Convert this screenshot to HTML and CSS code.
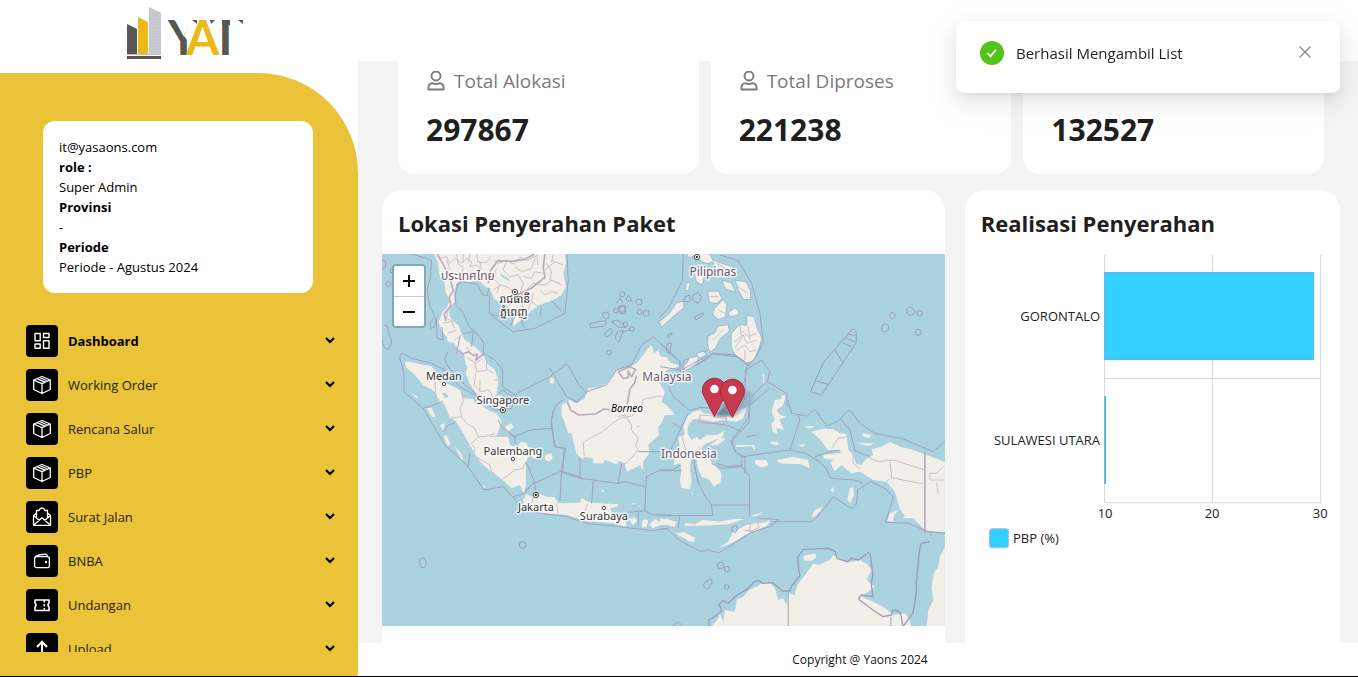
FILE: index.html
```html
<!DOCTYPE html>
<html lang="id">
<head>
<meta charset="utf-8">
<title>Dashboard</title>
<link rel="stylesheet" href="styles.css">
</head>
<body>
<svg class="defs" width="0" height="0" aria-hidden="true">
  <symbol id="chev" viewBox="0 0 12 12"><path d="M2 3l4 4 4-4" fill="none" stroke="currentColor" stroke-width="2.2"/></symbol>
  <symbol id="box" viewBox="0 0 20 20"><path d="M10 1.500L18.300 5v9.500L10 18.500 1.700 14.500V5zM1.700 5L10 8.700 18.300 5M10 8.700v9.800M5 3.600l8 3.500M7.500 2.500l8 3.500" fill="none" stroke="currentColor" stroke-width="1.300" stroke-linejoin="round"/></symbol>
  <symbol id="user" viewBox="0 0 20 20"><g fill="none" stroke="currentColor" stroke-width="1.900"><circle cx="10" cy="5" r="4.500"/><path d="M2.300 18.500c-.3-4 1.200-6.200 4.300-6.200 1.200 0 1.800.8 3.400.8s2.200-.8 3.400-.8c3.100 0 4.600 2.200 4.300 6.200z" stroke-linejoin="round"/></g></symbol>
</svg>
<div class="app">
  <aside class="sidebar">
    <div class="brand">
      <svg class="logo" viewBox="124 6 122 56" role="img" aria-label="YAT">
        <path d="M127 24l10 5v25h-10z" fill="#575755"/>
        <path d="M138 17l10 5v32h-10z" fill="#ebb91a"/>
        <path d="M149 7l12 6v41h-12z" fill="#c6c5ca"/>
        <path d="M151 12v42M154 11v43M157 14v40M160 15v39" stroke="#d8d7dc" stroke-dasharray="1 2"/>
        <path d="M127 54.500h34" stroke="#c9b9c4"/>
        <path d="M127 56h34v3h-34z" fill="#575755"/>
        <text class="mark" x="168" y="55">Y</text>
        <path d="M184 36l5-11 1-6h12v15l-12 14h-3v-8z" fill="#fff"/>
        <path d="M192 20h5v4z" fill="#575755"/>
        <text class="mark" x="211" y="55">T</text>
        <path d="M208 19h14v8h-14zM230 19h14v8h-14z" fill="#fff"/>
        <path d="M210 20h5l-4 4zM238 20h5v4z" fill="#575755"/>
        <text class="mark accent" x="186" y="55">A</text>
      </svg>
    </div>
    <div class="panel">
      <div class="profile">
        <div>it@yasaons.com</div><b>role :</b><div>Super Admin</div><b>Provinsi</b><div>-</div><b>Periode</b><div>Periode - Agustus 2024</div>
      </div>
      <nav class="menu">
        <a class="item active" href="#"><span class="tile"><svg viewBox="0 0 20 20"><path d="M3 2.500h5.200v7.200H3zM11.500 2.500H17v4h-5.500zM3 13h5.200v4.300H3zM11.500 9.800H17v7.500h-5.500z" fill="none" stroke="currentColor" stroke-width="1.400" stroke-linejoin="round"/></svg></span><span class="name">Dashboard</span><svg class="chev"><use href="#chev"/></svg></a>
        <a class="item" href="#"><span class="tile"><svg><use href="#box"/></svg></span><span class="name">Working Order</span><svg class="chev"><use href="#chev"/></svg></a>
        <a class="item" href="#"><span class="tile"><svg><use href="#box"/></svg></span><span class="name">Rencana Salur</span><svg class="chev"><use href="#chev"/></svg></a>
        <a class="item" href="#"><span class="tile"><svg><use href="#box"/></svg></span><span class="name">PBP</span><svg class="chev"><use href="#chev"/></svg></a>
        <a class="item" href="#"><span class="tile"><svg viewBox="0 0 20 20"><path d="M4.500 11V3.500h2.500Q8 1 10 1t3 2.500h2.500V11M4.500 6L1.500 8.500v9.800h17V8.500L15.500 6M1.500 8.500l6 5M18.500 8.500l-6 5M1.500 18.300L10 10.800l8.500 7.500" fill="none" stroke="currentColor" stroke-width="1.300" stroke-linejoin="round"/></svg></span><span class="name">Surat Jalan</span><svg class="chev"><use href="#chev"/></svg></a>
        <a class="item" href="#"><span class="tile"><svg viewBox="0 0 20 20"><rect x="2.600" y="5.700" width="14.800" height="11" rx="2" fill="none" stroke="currentColor" stroke-width="1.300"/><path d="M3 6.500Q4 4.500 7 4l6-.9q2-.2 2.500 2" fill="none" stroke="currentColor" stroke-width="1.300"/><circle cx="14" cy="11" r="1.200" fill="currentColor"/></svg></span><span class="name">BNBA</span><svg class="chev"><use href="#chev"/></svg></a>
        <a class="item" href="#"><span class="tile"><svg viewBox="0 0 20 20"><path d="M3 5h14v3q-2 2 0 4v3.500H3V12q2-2 0-4z" fill="none" stroke="currentColor" stroke-width="1.600" stroke-linejoin="round"/><path d="M12.300 5v10.500" stroke="currentColor" stroke-width="1.600" stroke-dasharray="2.500 1.500"/></svg></span><span class="name">Undangan</span><svg class="chev"><use href="#chev"/></svg></a>
        <a class="item" href="#"><span class="tile"><svg viewBox="0 0 20 20"><path d="M10 18V3M5 8l5-5.300L15 8" fill="none" stroke="currentColor" stroke-width="2"/></svg></span><span class="name">Upload</span><svg class="chev"><use href="#chev"/></svg></a>
      </nav>
    </div>
  </aside>
  <div class="page">
    <header class="topbar"></header>
    <main class="content">
      <section class="stats">
        <article class="stat"><p class="label"><svg><use href="#user"/></svg>Total Alokasi</p><p class="value">297867</p></article>
        <article class="stat"><p class="label"><svg><use href="#user"/></svg>Total Diproses</p><p class="value">221238</p></article>
        <article class="stat"><p class="value">132527</p></article>
      </section>
      <section class="cards">
        <article class="card">
          <h2>Lokasi Penyerahan Paket</h2>
          <div class="map">
            <svg class="canvas" viewBox="382 254 563 372" preserveAspectRatio="xMidYMid slice">
              <!-- mainland and peninsula -->
              <g transform="translate(380 180) scale(.33333)">
                <path class="land" d="M160 215L175 250 178 285 192 298 198 340 210 360 200 385 188 395 176 425 184 450 200 470 205 486 222 488 240 516 252 520 256 550 262 560 258 580 268 610 282 630 295 655 320 675 370 690 385 670 372 655 350 640 355 600 345 570 320 550 310 525 290 505 270 490 255 480 244 460 235 435 222 425 210 410 208 385 225 365 222 335 232 310 240 298 260 306 295 300 315 320 330 325 345 360 368 367 385 380 402 400 400 440 415 425 440 410 450 395 478 375 515 362 545 345 558 320 550 280 558 250 556 215Z"/>
                <path class="sea" d="M360 280l25 15 5 10-25-15z"/>
                <path class="prov" d="M180 235l20-5 10 20 15-15 20 15 15-15 15 10-5 15 20-5 15 15-5-25M230 222l5 30 15 10-5 30 20 10M200 240l10 25-15 15 20 10M250 222v25M270 222l-5 25M290 222l5 25 25 0 15-20M340 240l15 10 25-10 20 12 20-20 20 10 30-15M350 265l-10 30 20 20-10 25M380 240l-10 30 20 20 25-5 15 25-10 30 20 10M405 260l20 15 30-10 10-30M430 290l25 5 10-20 25 5M440 330l20-20 35 5 20-15 30 15M460 340l-5 25 20 15M480 330l15 15 20-10 20 5M500 250l15 25-5 25 30 10M495 270l30-25 25 10M430 345l25 15-10 30M385 380l20-20 20 10 10 25-20 15M340 330l25-15 25 10 10 15M470 225l5 30M520 222l-5 25M205 390l-5 25 20 10M190 430l25-5 10 20M205 460l25-10M225 480l20-15M220 505l15 10M258 530l30 20 20-15M285 550l5 25 35-5 15 10M288 575l-5 40 20 20 25-5 10 20M300 600v35M320 530v40M260 500l10 20M340 600h14"/>
                <path class="nation" d="M172 222l20 35 18 35 10 40-12 20 5 25-20 25 5 22M325 310l8-40 20-28 40 2 40-5 30-17M495 222l-5 40 5 30-40 32-45 22M238 510l10 12 18-7 15 12 12-5-5 18 25-20"/>
                <path class="bound" d="M95 222l60 18-3 50-10 40 8 50 15 30-15 20 2 15 12-5 5-25 3 60 18 5-5-40M235 310l-9 35 2 30 22 25 18 40 32 30 12 20-2 30 35 20 23 30v50l42 28M228 315l20-10 45 8 14 30 15 5 5-25M330 340l-2 60 37 30 35 25 65-10 90-45 10-100-4-80M328 400l20 8 60-15M390 440l15-30M430 440l-8-30M485 380l-5 30M515 362l30 32M250 460l30-5M280 455l-5 45M205 515l-5 10-6 15 10 20 40 45 55 45M240 470l-10 50"/>
                <g class="ring"><path d="M6 240q12 0 12 12t-12 16M12 435q14 0 12 14t8 24q8 20-8 36-18-5-16-30M630 430l45-8q10 10-5 16l-38 6zM672 462l18-16q12 5 5 16l-16 10zM705 475l8-20 18-4-8 20-6 16zM695 425l15-5 18 10 8 12-20 0zM720 400l-5-20 20-5 3 25zM710 370l10-15 10 15M738 360l8-15 10 18zM728 455l25-5"/><circle cx="26" cy="312" r="8"/><circle cx="39" cy="271" r="8"/><circle cx="727" cy="343" r="8"/><circle cx="777" cy="366" r="9"/><circle cx="799" cy="400" r="9"/><circle cx="779" cy="396" r="7"/><circle cx="727" cy="388" r="9"/><circle cx="708" cy="392" r="7"/><circle cx="678" cy="406" r="10"/><circle cx="737" cy="433" r="7"/><circle cx="756" cy="447" r="7"/><circle cx="687" cy="518" r="7"/></g>
              </g>
              <!-- Sumatra -->
              <g transform="translate(380 330) scale(.33333)">
                <path class="land" d="M75 95L100 97 130 105 155 108 165 125 200 160 240 180 250 205 280 208 285 220 300 215 315 235 335 245 350 250 365 275 355 305 350 318 385 320 390 345 410 350 425 335 440 340 445 350 480 370 465 388 450 375 438 395 438 470 430 488 420 465 395 475 375 455 340 430 310 405 290 380 270 345 250 310 225 270 210 265 195 225 175 210 165 185 130 165 100 130 78 112ZM140 235l15-2 12 28-10 0zM190 318l10-3 12 28-8 5zM222 345l25 30 2 20zM90 188l25 12-5 4zM495 375l20-5 3 15-10 10-12-5zM510 148l12-4v15l-8 2zM375 290l20-10 5 12-18 15zM180 285l15-5-5 22zM310 466l8 4-6 4z"/>
                <path class="sea" d="M186 188l12 0 8 14-12 2z"/>
                <path class="prov" d="M160 135l5 20 3 45 10 10M245 185l5 30-10 20 5 25-35 5M245 260l15 20 25 15 10 25 20 0 30-10M295 320l-20 20 10 15-5 20 50 30 5 20 30 25 40-30 25-5 5-15 15 10M330 320l75-3"/>
                <path class="bound" d="M60 85q0-20 15-12l20 12 60 15 40 20 45 50 60 35 45 35 50-5 15-45 100-50 45-35q8-5 12 5l30 55 45 50M60 85l12 40v60l58 50 65 110 70 65 47 70 58-10 45 50M130 235l60-20M190 305l15-20 20-5M265 410l5-40M355 270l10 20 40 30v20M405 320l45-20 65-5M405 320l-15-5M515 295q-5-55 25-80M515 295l12 55 30 5-12 68-90 40-20 20M438 395l22 50 8 35M545 423l60 20M545 423l-5 90M400 500l35-10 20-27M605 215l-25 0-20 8"/>
                <path class="ring" d="M345 200l25-20 25 20M290 205l50 15"/>
              </g>
              <!-- Java and the Indian Ocean -->
              <g transform="translate(380 400) scale(.33333)">
                <path class="land" d="M430 300L440 282 455 290 470 278 500 290 525 292 535 310 600 308 605 294 620 303 635 308 715 313 712 320 690 325 700 345 735 355 740 380 700 370 620 362 560 345 480 338 430 320ZM745 355l20-2 8 8-15 14zM785 365l10-8 10 5-5 20-14 0zM808 372l20-15 10 10 20-12 30 12-5 8-40 0-25 10zM665 270h6v5h-6zM755 310h12v3h-12zM775 315l8 4h-8z"/>
                <path class="prov" d="M460 290l-5 25M530 310l5 30M625 310l-10 25-5 25"/>
                <path class="bound" d="M412 312l68 28 80 10 60 20 80 8 60 7 60 7 45-8M600 235l-60-20M600 170v65l115 15 10-60M715 250l20-5 63 15 2-30 35-18 100 0M798 260l-3 72-50 5M795 332l20 12 60 2M640 245l-5 65M775 335v45"/>
                <g class="ring"><circle cx="428" cy="435" r="10"/><path d="M120 490q-2-16 8-16t10 14q4 15-8 15t-10-13z"/></g>
              </g>
              <!-- Borneo and Sulawesi -->
              <g transform="translate(550 320) scale(.33333)">
                <path class="land" d="M305 75L312 100 325 90 332 110 350 112 362 128 388 136 375 145 350 150 338 170 322 180 345 215 335 245 355 260 375 285 345 285 335 310 325 320 327 345 310 360 295 375 298 400 280 425 280 445 275 450 272 435 230 455 225 430 208 423 200 433 165 420 160 430 130 430 130 415 105 412 95 417 80 400 72 370 65 340 55 340 45 310 35 285 35 255 60 240 80 250 105 235 115 205 150 200 170 190 200 150 240 140 260 130 280 105 295 85ZM0 173l10 5 0 12-10 0z"/>
                <path class="land" d="M405 345L400 320 412 290 430 275 450 270 462 280 500 285 545 290 565 270 590 262 580 295 560 305 520 300 490 305 450 297 430 297 415 315 412 340 425 360 440 350 450 360 470 345 500 345 525 332 518 350 490 362 460 375 455 390 465 400 480 420 500 440 515 460 510 490 490 500 480 480 455 470 445 445 440 420 425 412 420 440 425 480 420 508 395 505 390 480 395 450 390 430 372 435 375 400 390 380 385 350ZM425 510l5 18-4-4zM505 460l10 8-5 25zM480 375l30-22 18 3-25 20z"/>
                <path class="prov" d="M345 235l-15-7-25 5-25 5-10 30-25 20-30 5-25 15-35 30-25 10-30 20 3 40M205 290l20-5 20 30 0 15 20 25-8 20 8 15-30 35-15 10-3 25M270 320h-10M450 285l-2 20 80 10v-20l-40-5M395 345l8 30 10 30M460 400l-15-20"/>
                <path class="nation" d="M52 245l10 25 25 15 50-3 25-15 45 5M230 262l10-55 15-20 5-20M205 155l15 20 15-2 0-20 10 18 10-20M205 155l35-15 20 10"/>
                <path class="bound" d="M0 145l50 85 30 15 30-30 60-20 30-45 45-15 30-60 35-25 45 40 35 35 0 15M390 155l60-25 40-28 70 8 40 30M600 130l-10 10-5 40-30 45-50 40M355 195l15 35 50 42 30-10 60 5M605 230l50-50M660 205l-60 50-5 40-50 65 10 35 30 15v50M360 395l55-115M330 395l-65 0M445 305l85 10 45 20M370 310l25 15M430 412l15 80M500 430l30 10 50-5M40 240q-30 10-35 60l8 80 30 5-5 70"/>
                <path class="ring" d="M395 140l8-20 40-10 30-20M400 150l40-15 40-25"/>
              </g>
              <!-- Philippines and the Pacific -->
              <g transform="translate(660 180) scale(.33333)">
                <g class="isle"><path d="M80 215L125 215 150 225 160 245 140 250 120 240 110 228 85 230ZM160 240l25 12 30 8 8 30-18-2-15-20-25-5zM100 265l20 15 12 10-5 22-15-5zM145 335l30 0 10 20-15 15-20-5zM165 385l25-25 10 15-5 35-20 8-15-15zM188 302l25 8 12 25-28-10zM228 302l30 5 12 25 0 25-18 0-15-25zM205 400l20-15 12 10-5 10-20 3zM145 495l0-25 20-10 10-20 28-5 5 18-28 22-15 30-15 10zM215 500l0-40 25-25 22 2 0-30 20 5 8 30 15 35-10 30-15 35-20 5-35-25zM0 425l30-25 20-30 20-5 0 18-30 25-35 32zM70 565l20-30 25-5-5 20-30 20zM112 520l20-5 5 10-20 8zM80 310l10 0-5 20-8 0z"/></g>
                <path class="prov" d="M100 225l15 20M170 250l35 20M150 350h25M175 390l20 10M235 320l28 20M160 480l30-30M225 485l25-20 10 25 30-10M245 450l20 20 25-10M230 510l25-15 15 20 20-5M255 540l0-30M265 440l5 40M240 435l5 40-20 30"/>
                <path class="bound" d="M70 222l-2 78-43 85-25 27M180 225l55 17 40 68 25 90 10 85-20 45-25 25-40-30-65-5-60 30-35 20-65-10M258 570l47-30 25 35-8 30 58 35 2 40M258 570l-5 90M0 490l30 30 30 25 0 30"/>
                <path class="ring" d="M575 450q12-6 14 8v30L485 645l-33-10 38-87zM525 510l22 35M470 603l35 10M550 490l25 10M560 475l25 10M562 462l22 5M665 450q0-18 12-18t8 16q-8 14-20 2zM690 410q2-16 10-12t6 12q-8 14-16 0zM740 392q2-14 14-10l12 12-10 12q-14 2-16-14zM100 345l15-8 10 15-10 18-18-10zM75 350l15-5 0 20-18 0zM105 410l25-12-2 10-22 12zM28 460h10l-10 12-6-2zM22 490l12 0-5 30-10-5z"/>
                <g class="ring"><circle cx="779" cy="400" r="8"/><circle cx="775" cy="457" r="9"/></g>
                <path class="land" d="M308 580l5 5-2 15 5 8-6 0zM365 645l12 0-2 15-10 5z"/>
              </g>
              <!-- Papua, Timor and Australia -->
              <g transform="translate(660 400) scale(.33333)">
                <path class="land" d="M345 0L375 -5 370 15 350 30 360 45 380 50 358 58 372 90 350 85 352 100 338 95 335 70 345 60 335 35ZM455 95L490 86 520 88 540 100 560 102 565 150 580 165 590 192 605 195 620 175 640 165 635 148 665 140 690 125 720 140 760 150 855 185V395L830 395 795 390 760 355 725 355 700 365 682 362 690 340 720 328 705 275 680 245 640 240 600 215 575 220 545 195 525 213 512 190 520 180 490 175 490 165 545 158 535 150 505 150 480 118ZM350 180l50-10 45 10 5 25-25-12-65-3zM285 180l35 0 6 15-20 8-20-10zM175 445l30-20 15-30 40-20 70-15-5 15-70 30-40 25zM75 370l30 2 25-12 50 5 40-8 35 0-50 16-75 4-55 0zM0 355l50 10-5 15-45-10zM45 400l30-3 30 18-2 12-15-3-20-12zM270 348l40-12-20 12zM338 355l15 4-12 3zM455 350l10-20 25-10-15 20-15 12zM562 300l8-35 10-5 2 25-10 25zM228 135h55l2 18-10-15-45 3zM330 125l22 0 5 10-20-2zM412 135l25-2-10 8zM608 98l25 8-5 8-20-5zM590 130h55l-20 8zM430 80l35-2-15 8zM512 270l10-10-2 20zM0 15l35 25-35 8zM-10 5l10 5v30z"/>
                <path class="sea" d="M700 365q0-25 20-38l15 20-12 14z"/>
                <path class="land" d="M150 685L175 655 180 640 190 665 195 630 225 635 230 600 250 590 270 568 290 560 310 548 330 550 345 565 355 600 370 595 380 615 385 580 405 585 412 555 440 520 460 490 475 495 510 480 520 465 545 478 560 488 600 480 622 492 635 510 620 540 645 560 625 575 605 590 640 605 670 620 700 645 735 640 750 660 755 685ZM855 440L840 470 835 500 822 520 815 560 820 600 805 630 800 685H855ZM430 468l35-8 5 10-15 12-22 0z"/>
                <path class="prov" d="M120 45l80 5-2 28-75-10zM565 110l-30 5-20 30M580 165l0 25 20 15M620 170l35 15 45-5 95 30M690 180l5 50-15 15M690 232l100 20M810 220l20 0 20-20M810 220v20h45M248 375l25-5-5 25 30-12-5-15 30-3M250 390l30 5M545 60l-5 40M830 250l5 30"/>
                <path class="nation" d="M795 155v245"/>
                <path class="bound" d="M385 0l10 40 45 8 15-12q8-12 15 0l30 42 35-15 28-30q8-5 14 5l23 32 45 30 80 15 95 40 55-50M415 45l5 15-30 90M540 55l30 35 15 60M465 170l45-15 30-5M0 210l38 0 25-15M270 0l-2 65-30 35-25 25 18 35 15 10v30l23 30v120M248 170l140-20 50 10 40 25 20 20 15 30 70 5 25 10M100 160q5 100 55 155h115M155 312l3 35H0M0 388l22-2 30 30 30 18 40 20 22-5 32 10 50-30 45-30 60-20 25-20-65-5M155 190l30 15 60-5M335 365h120q10-2 65-75l45 30q20 10 25-10l3-40 40-25 45 22 22 25-23 75 70 3 55 25 55 5M385 575v110M693 650v35M260 110l30-5M60 345l-5 40M580 150l50 20"/>
                <path class="coast" d="M148 685l-2-25 15-8 25-20-8-20 12-10 15 8 20-20 40-25 18-20 15-3 10 8 30-2 30 25h22l5-15 25-30-5-30-2-25 18-25 75-3 20 10 5 20 30 10 15-10 20 5 20-15q12-14 15 0l8 60-5 25 5 40-35-5q-10 8-5 15l40 30 30 20 25-5 5-15q25 0 25 20l5 30 15-20 15-20 10-60v-30l10-100 5-20 25-5"/>
                <g class="ring"><circle cx="182" cy="496" r="10"/><circle cx="201" cy="507" r="8"/><circle cx="200" cy="561" r="7"/><path d="M132 560q-2-15 12-18 5-8 12-2 2 12-6 18-2 18-18 2zM218 380l10-4 6 10-8 12-10-6zM35 680l20-15 10 10M808 410l8-8"/></g>
              </g>
              <defs><linearGradient id="shade"><stop offset="0" stop-color="#354b58" stop-opacity=".65"/><stop offset="1" stop-color="#354b58" stop-opacity=".1"/></linearGradient><filter id="soft"><feGaussianBlur stdDeviation="1.500"/></filter></defs>
              <g class="town"><circle cx="444" cy="384" r="1.700"/><circle cx="513" cy="459" r="1.700"/><circle cx="604" cy="508" r="1.700"/></g>
              <g class="capital"><circle cx="515" cy="292" r="2.700"/><circle cx="503" cy="410" r="2.700"/><circle cx="536" cy="495" r="2.700"/><circle cx="697" cy="257" r="2.700"/></g>
              <g class="dot"><circle cx="515" cy="292" r="1"/><circle cx="503" cy="410" r="1"/><circle cx="536" cy="495" r="1"/><circle cx="697" cy="257" r="1"/></g>
              <g class="country"><text x="468" y="280">ประเทศไทย</text><text x="713" y="276">Pilipinas</text><text x="667" y="381">Malaysia</text><text x="689" y="458">Indonesia</text></g>
              <g class="city"><text x="515" y="303">រាជធានី</text><text x="514" y="316">ភ្នំពេញ</text><text x="444" y="380">Medan</text><text x="503" y="404">Singapore</text><text x="513" y="455">Palembang</text><text x="536" y="511">Jakarta</text><text x="604" y="520">Surabaya</text><text class="isl" x="627" y="412">Borneo</text></g>
              <path d="M715 416l18-21q16-9 21 0 3 8-19 21z" fill="url(#shade)" filter="url(#soft)"/>
              <g class="pin"><path d="M714.500 416.500L704 396a12 12 0 1 1 21 0z"/><circle cx="714.500" cy="389" r="4.300"/><path d="M732.500 417.500L722 397a12 12 0 1 1 21 0z"/><circle cx="732.500" cy="390" r="4.300"/></g>
            </svg>
            <div class="zoom"><button type="button" aria-label="Zoom in"><svg viewBox="0 0 12 12"><path d="M0 6h12M6 0v12"/></svg></button><button type="button" aria-label="Zoom out"><svg viewBox="0 0 12 12"><path d="M0 6h12"/></svg></button></div>
          </div>
        </article>
        <article class="card">
          <h2>Realisasi Penyerahan</h2>
          <svg class="chart" viewBox="965 254 375 300">
            <path class="grid" d="M1104.500 255v248M1212.500 255v248M1320.500 255v248M1104 378.500h216M1104 502.500h216"/>
            <path class="bar" d="M1104.500 272.500h209v87h-209zM1104.500 396.500h1v87h-1z"/>
            <g class="end"><text x="1100" y="321">GORONTALO</text><text x="1100" y="445">SULAWESI UTARA</text></g>
            <g class="mid"><text x="1105" y="518">10</text><text x="1212" y="518">20</text><text x="1320" y="518">30</text></g>
            <rect class="key" x="989.500" y="528.500" width="19" height="19" rx="3"/>
            <text x="1013" y="543">PBP (%)</text>
          </svg>
        </article>
      </section>
    </main>
    <footer class="footer">Copyright @ Yaons 2024</footer>
  </div>
</div>
<div class="toast" role="status">
  <svg class="ok" viewBox="0 0 24 24"><circle cx="12" cy="12" r="12" fill="#52c41a"/><path d="M7.500 12l3 3.300L16 8.700" fill="none" stroke="#fff" stroke-width="1.800"/></svg>
  <span class="message">Berhasil Mengambil List</span>
  <button class="close" type="button" aria-label="Tutup"><svg viewBox="0 0 12 12"><path d="M.5.500l11 11M11.500.500l-11 11" stroke="#888" stroke-width="1.300"/></svg></button>
</div>
</body>
</html>
```

FILE: styles.css
```css
* { box-sizing: border-box; }
body { margin: 0; font-family: "Segoe UI", "Open Sans", "Noto Sans", sans-serif; font-size: 13px; color: #000; background: #fff; }
p, h2 { margin: 0; }
button { border: 0; padding: 0; background: none; cursor: pointer; }
.defs { position: absolute; }
.app { display: flex; height: 100vh; border-bottom: 1px solid #000; overflow: hidden; }

.sidebar { flex: 0 0 358px; display: flex; flex-direction: column; }
.brand { flex: 0 0 73px; padding: 6px 0 0 124px; }
.logo { display: block; width: 122px; height: 56px; overflow: visible; }
.mark { font: 700 48px Lato, sans-serif; fill: #575755; }
.mark.accent { fill: #ebb91a; }
.panel { flex: 1; min-height: 0; display: flex; flex-direction: column; padding: 48px 0 24px; background: #ebc338; border-top-right-radius: 100px; }
.profile { flex: none; margin: 0 45px 32px 43px; padding: 16px; line-height: 20px; background: #fff; border-radius: 12px; }
.profile b { display: block; }
.menu { flex: 1; min-height: 0; overflow: hidden; display: flex; flex-direction: column; gap: 12px; padding: 0 22px 0 26px; }
.item { flex: none; display: flex; align-items: center; gap: 10px; color: #1d1d10; text-decoration: none; line-height: 20px; }
.item.active { color: #000; font-weight: 700; }
.tile { display: grid; place-items: center; width: 32px; height: 32px; border-radius: 4px; background: #000; color: #fff; }
.tile svg { width: 20px; height: 20px; }
.name { flex: 1; }
.chev { width: 12px; height: 12px; color: #000; }

.page { flex: 1; min-width: 0; display: flex; flex-direction: column; }
.topbar { flex: 0 0 61px; background: #fff; }
.content { flex: 1; min-height: 0; overflow: hidden; padding: 0 18px 0 24px; background: #f4f4f4; display: flex; flex-direction: column; gap: 16px; }
.stats { flex: none; display: grid; grid-template-columns: repeat(3, 1fr); gap: 12px; padding: 0 16px; }
.stat { display: flex; flex-direction: column; justify-content: flex-end; gap: 13px; padding: 4px 28px 24px; background: #fff; border-radius: 0 0 16px 16px; }
.label { display: flex; align-items: center; gap: 8px; font-size: 19px; line-height: 32px; color: #7a7a80; }
.label svg { width: 20px; height: 20px; }
.value { font-size: 30px; font-weight: 700; line-height: 40px; color: #1f1f1f; }
.cards { flex: 1 0 auto; display: grid; grid-template-columns: 3fr 2fr; gap: 20px; }
.card { background: #fff; border-radius: 20px 20px 0 0; min-width: 0; padding-bottom: 24px; }
.card h2 { padding: 17px 16px 15px; font-size: 22px; line-height: 32px; font-weight: 700; color: #1f1f1f; }

.map { position: relative; height: 372px; background: #abd3df; overflow: hidden; }
.canvas { display: block; width: 100%; height: 100%; }
.land, .isle { fill: #f2efe9; }
.isle { stroke: #9cb9cf; stroke-width: 5; paint-order: stroke; }
.sea { fill: #abd3df; }
.prov, .nation, .bound, .ring, .coast { fill: none; stroke-linejoin: round; }
.prov { stroke: #cdbccb; stroke-width: 3; }
.nation { stroke: #bda9be; stroke-width: 5; }
.bound { stroke: #a2a0bf; stroke-width: 3; }
.ring { stroke: #9c9bba; stroke-width: 3; }
.coast { stroke: #9c9bba; stroke-width: 4; }
.country text, .city text { font-family: "Noto Sans", "Noto Sans Thai", "Noto Sans Khmer", sans-serif; text-anchor: middle; paint-order: stroke; stroke: #fff; stroke-opacity: .75; stroke-width: 3px; stroke-linejoin: round; }
.country text { font-size: 12px; fill: #73566f; }
.city text { font-size: 11px; fill: #333; }
.city .isl { font-style: italic; font-size: 10px; fill: #000; }
.town circle, .capital circle { fill: #fff; stroke: #444; }
.pin path { fill: #c8394d; stroke: #a62c3f; }
.pin circle { fill: #fff; }
.zoom { position: absolute; top: 10px; left: 10px; display: flex; flex-direction: column; border: 2px solid #86a8b2; border-radius: 4px; overflow: hidden; }
.zoom button { display: grid; place-items: center; width: 30px; height: 30px; background: #fff; }
.zoom button + button { border-top: 1px solid #ccc; }
.zoom svg { width: 12px; height: 12px; stroke: #000; stroke-width: 2; }

.chart { display: block; width: 100%; font-size: 13px; fill: #222; }
.chart .grid { stroke: #dcd6da; fill: none; }
.chart .bar { fill: #32cfff; stroke: #5eb8e6; }
.chart .key { fill: #32cfff; stroke: #9cc8d8; }
.chart .end { text-anchor: end; }
.chart .mid { text-anchor: middle; }
.footer { flex: 0 0 32px; padding: 1px 0 0 4px; text-align: center; font-size: 12px; line-height: 32px; color: #111; background: #fff; }

.toast { position: fixed; top: 21px; right: 18px; width: 384px; height: 72px; padding: 20px 28px 0 24px; display: flex; align-items: flex-start; gap: 12px; background: #fff; border-radius: 8px; box-shadow: 0 6px 16px rgba(0,0,0,.08), 0 3px 6px -4px rgba(0,0,0,.12), 0 9px 28px 8px rgba(0,0,0,.05); }
.ok { width: 24px; height: 24px; }
.message { flex: 1; font-size: 15px; line-height: 24px; color: #1f1f1f; }
.close { display: grid; place-items: center; width: 14px; height: 22px; }
.close svg { width: 12px; height: 12px; }
```
